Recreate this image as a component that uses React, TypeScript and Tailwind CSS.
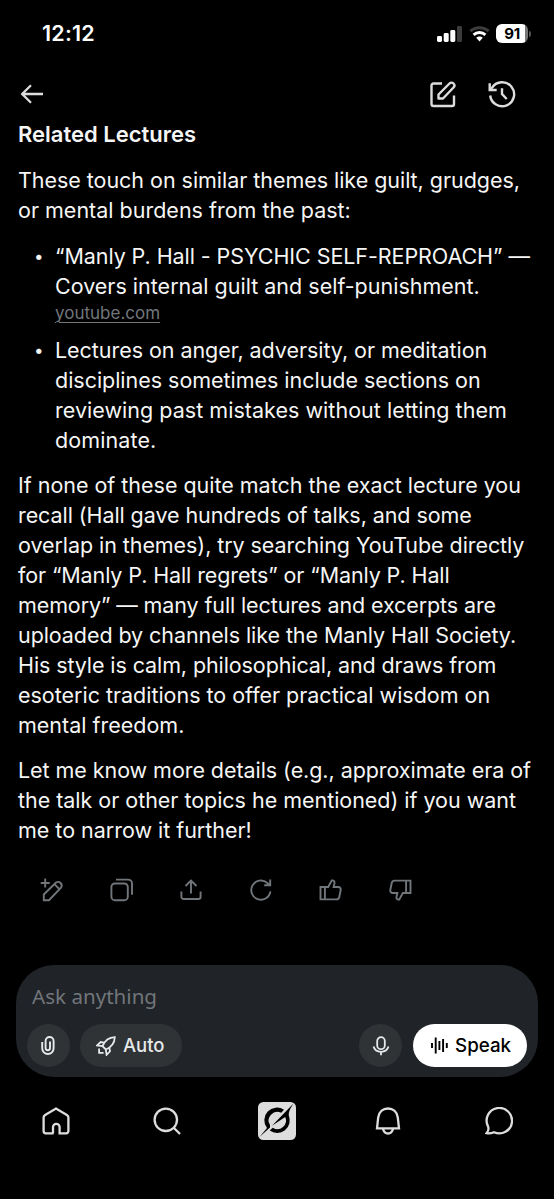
import React from "react";

type TextLine = { text: string; className: string };

const intro: TextLine[] = [
  { text: "These touch on similar themes like guilt, grudges,", className: "tracking-[-0.04px]" },
  { text: "or mental burdens from the past:", className: "tracking-[0px]" },
];

const firstItem: TextLine[] = [
  { text: "“Manly P. Hall - PSYCHIC SELF-REPROACH” —", className: "tracking-[-0.07px]" },
  { text: "Covers internal guilt and self-punishment.", className: "tracking-[0px]" },
];

const secondItem: TextLine[] = [
  { text: "Lectures on anger, adversity, or meditation", className: "tracking-[-0.05px]" },
  { text: "disciplines sometimes include sections on", className: "tracking-[-0.03px]" },
  { text: "reviewing past mistakes without letting them", className: "tracking-[0.03px]" },
  { text: "dominate.", className: "tracking-[0.1px]" },
];

const searchTips: TextLine[] = [
  { text: "If none of these quite match the exact lecture you", className: "tracking-[-0.02px]" },
  { text: "recall (Hall gave hundreds of talks, and some", className: "tracking-[-0.08px]" },
  { text: "overlap in themes), try searching YouTube directly", className: "tracking-[-0.07px]" },
  { text: "for “Manly P. Hall regrets” or “Manly P. Hall", className: "tracking-[-0.11px]" },
  { text: "memory” — many full lectures and excerpts are", className: "tracking-[-0.11px]" },
  { text: "uploaded by channels like the Manly Hall Society.", className: "tracking-[-0.08px]" },
  { text: "His style is calm, philosophical, and draws from", className: "tracking-[-0.1px]" },
  { text: "esoteric traditions to offer practical wisdom on", className: "tracking-[-0.02px]" },
  { text: "mental freedom.", className: "tracking-[0px]" },
];

const closing: TextLine[] = [
  { text: "Let me know more details (e.g., approximate era of", className: "tracking-[-0.06px]" },
  { text: "the talk or other topics he mentioned) if you want", className: "tracking-[-0.03px]" },
  { text: "me to narrow it further!", className: "tracking-[-0.02px]" },
];

const Lines: React.FC<{ lines: TextLine[] }> = ({ lines }) => (
  <>
    {lines.map((line) => (
      <span key={line.text} className={`block whitespace-nowrap ${line.className}`}>
        {line.text}
      </span>
    ))}
  </>
);

type IconProps = {
  className: string;
  viewBox?: string;
  strokeWidth?: number;
  children: React.ReactNode;
};

const Icon: React.FC<IconProps> = ({
  className,
  viewBox = "0 0 24 24",
  strokeWidth = 1.9,
  children,
}) => (
  <svg
    className={`shrink-0 ${className}`}
    viewBox={viewBox}
    fill="none"
    stroke="currentColor"
    strokeWidth={strokeWidth}
    aria-hidden="true"
  >
    {children}
  </svg>
);

const StatusBar = () => (
  <div className="flex h-[67px] items-center justify-between pr-[23px] pl-[42px]">
    <span className="text-[21.5px] font-semibold tracking-[0.2px]">12:12</span>
    <div className="flex items-center">
      <svg className="h-4 w-[25px]" viewBox="0 0 25 16" fill="currentColor">
        <rect x="0" y="10" width="5" height="6" rx="1.4" />
        <rect x="6.7" y="7" width="5" height="9" rx="1.4" />
        <rect x="13.3" y="4" width="5" height="12" rx="1.4" />
        <rect x="20" y="0" width="5" height="16" rx="1.4" fill="#3c3c3c" />
      </svg>
      <svg className="ml-[7px] h-4 w-[21px]" viewBox="0 0 21 16" fill="none" strokeWidth="3">
        <path d="M1.3 5.2C6.5.5 14.5.5 19.7 5.2" stroke="#3c3c3c" />
        <path d="M4.6 8.8C8 5.8 13 5.8 16.4 8.8" stroke="#fff" />
        <path d="M7.2 11.8C9 10 12 10 13.8 11.8L10.5 15.5Z" fill="#fff" />
      </svg>
      <div className="ml-[6px] flex h-[19px] w-[32px] items-center justify-center rounded-[6px] bg-[linear-gradient(90deg,#fff_91%,#777_91%)] pt-px text-[15px] font-bold tracking-[-0.3px] text-black">
        91
      </div>
      <span className="ml-px h-[6px] w-[2px] rounded-r-full bg-[#555]" />
    </div>
  </div>
);

const Header = () => (
  <header className="flex h-[52px] items-center justify-between pt-px pr-[38px] pl-[19px] text-[#dddddd]">
    <Icon className="h-6 w-6" strokeWidth={2.3}>
      <path d="M12 3.3 3.2 12l8.8 8.7M2.5 12H24" />
    </Icon>
    <div className="flex items-center gap-[31px]">
      <Icon className="h-7 w-7" viewBox="0 0 28 28" strokeWidth={2.4}>
        <path d="M13 3.5H4.5a2 2 0 0 0-2 2V24a2 2 0 0 0 2 2H23a2 2 0 0 0 2-2v-8.5" />
        <path d="m9.5 14.5 11-11a2.7 2.7 0 0 1 4 4L14 18.5H9.5Z" strokeLinejoin="round" />
      </Icon>
      <Icon className="h-7 w-7" viewBox="0 0 28 28" strokeWidth={2.4}>
        <path d="M2.2 15.5A12 12 0 1 0 4.2 7.5L1.8 10" />
        <path d="M1.7 3.2V10h7" />
        <path d="M14 8.3V14l4.7 5" />
      </Icon>
    </div>
  </header>
);

const Actions = () => (
  <div className="mt-[33px] flex h-6 items-center gap-[45.7px] pl-10 text-[#71767b]">
    <Icon className="h-6 w-6">
      <path d="M3.8 22.2v-5.7L16 4.6a3.6 3.6 0 0 1 5 5L9 22.2ZM14.4 6.2l5 5M5.2.5v9M.7 5h9" />
    </Icon>
    <Icon className="h-6 w-6">
      <rect x="1.4" y="5.5" width="16.4" height="16.7" rx="3.5" />
      <path d="M6 1.6h12a4 4 0 0 1 4 4v11.2" />
    </Icon>
    <Icon className="h-6 w-6">
      <path d="M12 15.4V2.6M6.5 8 12 2.5 17.5 8M2.4 13.5v5.2a2.3 2.3 0 0 0 2.3 2.3h14.6a2.3 2.3 0 0 0 2.3-2.3v-5.2" />
    </Icon>
    <Icon className="h-6 w-6">
      <path d="M21.4 13.4A9.6 9.6 0 1 1 18.3 5l2.5 2.2M21.2 1.5v5.7h-6" />
    </Icon>
    <Icon className="h-6 w-6">
      <path d="M1.5 9h4.4v12.4H1.5ZM5.9 9h3.3l3.6-6.6c2.2-.3 3 1.1 2.7 2.8L14.6 9h4.7a2.5 2.5 0 0 1 2.4 3l-1.4 7a3 3 0 0 1-2.9 2.4H5.9" />
    </Icon>
    <Icon className="h-6 w-6">
      <path d="M22.5 15h-4.4V2.6h4.4ZM18.1 15h-3.3l-3.6 6.6c-2.2.3-3-1.1-2.7-2.8L9.4 15H4.7a2.5 2.5 0 0 1-2.4-3l1.4-7a3 3 0 0 1 2.9-2.4h11.5" />
    </Icon>
  </div>
);

const Composer = () => (
  <div className="mx-auto mt-[63px] flex h-[112px] w-[522px] flex-col rounded-[38px] bg-[#202327] px-[11px] pt-[15px]">
    <div className="h-8 pl-[5px] font-['Noto_Sans'] text-[20.6px] leading-8 text-[#71767b]">
      Ask anything
    </div>
    <div className="mt-[12px] flex items-center text-[#e7e9ea]">
      <button className="flex h-[43px] w-[43px] items-center justify-center rounded-full bg-[#2f3336] pr-px">
        <Icon className="h-[19px] w-[14px]" viewBox="0 0 14 19">
          <path d="M1.2 6v6.3a5.7 5.7 0 0 0 11.4 0V5a4 4 0 0 0-8 0v7a2.2 2.2 0 0 0 4.4 0V5.5" />
        </Icon>
      </button>
      <button className="ml-[10px] flex h-[43px] w-[102px] items-center rounded-full bg-[#2f3336] pl-4 text-[18.5px] font-medium">
        <Icon className="mr-[7px] h-5 w-5" viewBox="0 0 20 20" strokeWidth={1.8}>
          <path d="M6.5 10.2C9 4.2 12.8 1.5 18.8 1.2c-.3 6-3 9.8-9 12.3ZM8 6.6 4.7 6 1.2 9.4l5.3.8M13.4 12l.6 3.3-3.4 3.5-.8-5.3M3.1 12.4v4.5h4.5" />
        </Icon>
        <span>Auto</span>
      </button>
      <button className="ml-auto flex h-[43px] w-[43px] items-center justify-center rounded-full bg-[#2f3336]">
        <Icon className="h-5 w-[18px]" viewBox="0 0 18 20" strokeWidth={1.8}>
          <rect x="5.2" y="1.2" width="7.6" height="12" rx="3.8" />
          <path d="M1.5 10.5c1 3.6 3.5 5.3 7.5 5.3s6.5-1.7 7.5-5.3M9 15.8V19.3" />
        </Icon>
      </button>
      <button className="ml-[11px] flex h-[43px] w-[114px] items-center rounded-full bg-white pl-[18px] text-[18.8px] font-medium text-black">
        <Icon className="mr-[7px] h-[17px] w-[17px]" viewBox="0 0 17 17">
          <path d="M1 6v5M4.7.5v16M8.4 4v9M12.1 2v13M15.8 6v5" />
        </Icon>
        <span className="pt-px">Speak</span>
      </button>
    </div>
  </div>
);

const BottomNav = () => (
  <nav className="mt-[25px] grid h-[38px] grid-cols-5 place-items-center pl-px text-[#dddddd]">
    <Icon className="h-7 w-7" viewBox="0 0 28 28" strokeWidth={2.3}>
      <path d="M11.6 26.3H3.8a2.2 2.2 0 0 1-2.2-2.2V10.6a3 3 0 0 1 1.5-2.6L14 1.6 24.9 8a3 3 0 0 1 1.5 2.6v13.5a2.2 2.2 0 0 1-2.2 2.2h-6.6v-6.2a3.3 3.3 0 0 0-6.600 0v6.200" />
    </Icon>
    <Icon className="h-7 w-7" viewBox="0 0 28 28" strokeWidth={2.3}>
      <circle cx="12.8" cy="12.8" r="11.2" />
      <path d="m20.7 20.7 6.3 6.3" />
    </Icon>
    <svg className="h-[38px] w-[38px] shrink-0" viewBox="0 0 38 38">
      <rect width="38" height="38" rx="5.5" fill="#dddddd" />
      <path
        d="M26 7.8A12.6 12.6 0 0 0 9 26L1.5 35 12 25.5V23A8.6 8.6 0 0 1 23.2 10.8Z"
        fill="#000"
      />
      <path
        d="M11.7 28.5A12.6 12.6 0 0 0 30.8 13.5C30.5 9 33 5.5 35.5 1.5L14 23.8 27.2 15A8.6 8.6 0 0 1 14.8 25.8Z"
        fill="#000"
      />
    </svg>
    <Icon className="h-7 w-7" viewBox="0 0 28 28" strokeWidth={2.3}>
      <path d="M4.2 10.5c.7-5.6 4.7-9 9.8-9s9.100 3.400 9.800 9l1.200 10.800H3ZM8.800 21.500c.9 3.400 2.600 5 5.200 5s4.300-1.600 5.200-5" />
    </Icon>
    <Icon className="h-7 w-7" viewBox="0 0 28 28" strokeWidth={2.3}>
      <path d="M1.5 26.2c2-2.2 2.3-4.6 1.6-6.6A12.7 12.7 0 1 1 9 25.2c-2.3 1-4.8 1.5-7.5 1Z" />
    </Icon>
  </nav>
);

export default function App() {
  return (
    <div className="h-[1199px] w-[554px] overflow-hidden bg-black font-['Inter',sans-serif] text-white">
      <StatusBar />
      <Header />
      <main className="pl-[18px] text-[21.5px] leading-[30px] text-[#f5f5f5]">
        <h1 className="text-[22px] font-semibold">Related Lectures</h1>
        <p className="mt-4">
          <Lines lines={intro} />
        </p>
        <ul className="mt-4 flex flex-col gap-[10px]">
          <li className="flex">
            <span className="w-[37px] pl-4 text-[17px]">•</span>
            <div>
              <Lines lines={firstItem} />
              <a className="block h-6 text-[17px] leading-6 text-[#71767b] underline decoration-1 underline-offset-[3px]">
                youtube.com
              </a>
            </div>
          </li>
          <li className="flex">
            <span className="w-[37px] pl-4 text-[17px]">•</span>
            <div>
              <Lines lines={secondItem} />
            </div>
          </li>
        </ul>
        <p className="mt-[15px]">
          <Lines lines={searchTips} />
        </p>
        <p className="mt-[15px]">
          <Lines lines={closing} />
        </p>
      </main>
      <Actions />
      <Composer />
      <BottomNav />
    </div>
  );
}
